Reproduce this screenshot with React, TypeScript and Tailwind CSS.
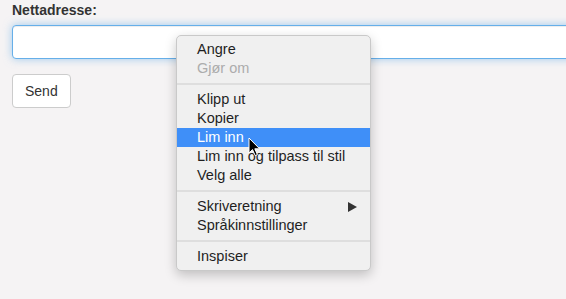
import { Fragment } from 'react';

type MenuEntry = { label: string; disabled?: boolean; active?: boolean; submenu?: boolean } | 'sep';

const entries: MenuEntry[] = [
  { label: 'Angre' },
  { label: 'Gjør om', disabled: true },
  'sep',
  { label: 'Klipp ut' },
  { label: 'Kopier' },
  { label: 'Lim inn', active: true },
  { label: 'Lim inn og tilpass til stil' },
  { label: 'Velg alle' },
  'sep',
  { label: 'Skriveretning', submenu: true },
  { label: 'Språkinnstillinger' },
  'sep',
  { label: 'Inspiser' },
];

const ContextMenu = () => (
  <div className="absolute left-[176px] top-[35px] w-[195px] py-[4px] bg-[#f0f0f0] border border-[#c9c9c9] rounded-[5px] shadow-[0_4px_12px_rgba(0,0,0,0.22)] text-[14.5px] leading-[19px]">
    {entries.map((e, i) => {
      if (e === 'sep') {
        return <div key={i} className="h-[2px] my-[5px] bg-[#dedede]" />;
      }
      return (
        <Fragment key={i}>
          <div
            className={
              'flex items-center justify-between h-[19px] pl-[20px] pr-[13px] ' +
              (e.active ? 'bg-[#3f8ff8] text-white' : e.disabled ? 'text-[#acacac]' : 'text-[#1f1f1f]')
            }
          >
            <span>{e.label}</span>
            {e.submenu && (
              <svg width="9" height="10" viewBox="0 0 9 10">
                <path d="M0 0 L9 5 L0 10 Z" fill="#333" />
              </svg>
            )}
          </div>
        </Fragment>
      );
    })}
  </div>
);

const Cursor = () => (
  <svg className="absolute left-[248px] top-[137px]" width="14" height="20" viewBox="0 0 14 20">
    <path
      d="M1 1 L1 16 L4.5 12.6 L7.2 18.6 L9.4 17.6 L6.8 11.8 L11.6 11.8 Z"
      fill="#000"
      stroke="#fff"
      strokeWidth="1"
      strokeLinejoin="round"
    />
  </svg>
);

export default function App() {
  return (
    <div className="relative w-[566px] h-[299px] overflow-hidden bg-[#f5f3f4] font-['Liberation_Sans',Arial,sans-serif] text-[#333]">
      <div className="pl-[12px]">
        <label className="block font-bold text-[14px] leading-[20px] mb-[5px]">Nettadresse:</label>
        <input
          type="text"
          className="block w-[600px] h-[34px] bg-white border border-[#66afe9] rounded-[4px] outline-none shadow-[inset_0_1px_1px_rgba(0,0,0,0.075),0_0_8px_rgba(102,175,233,0.6)]"
        />
        <button className="mt-[15px] h-[34px] px-[12px] bg-white border border-[#cccccc] rounded-[4px] text-[14px] text-[#333]">
          Send
        </button>
      </div>
      <ContextMenu />
      <Cursor />
    </div>
  );
}
